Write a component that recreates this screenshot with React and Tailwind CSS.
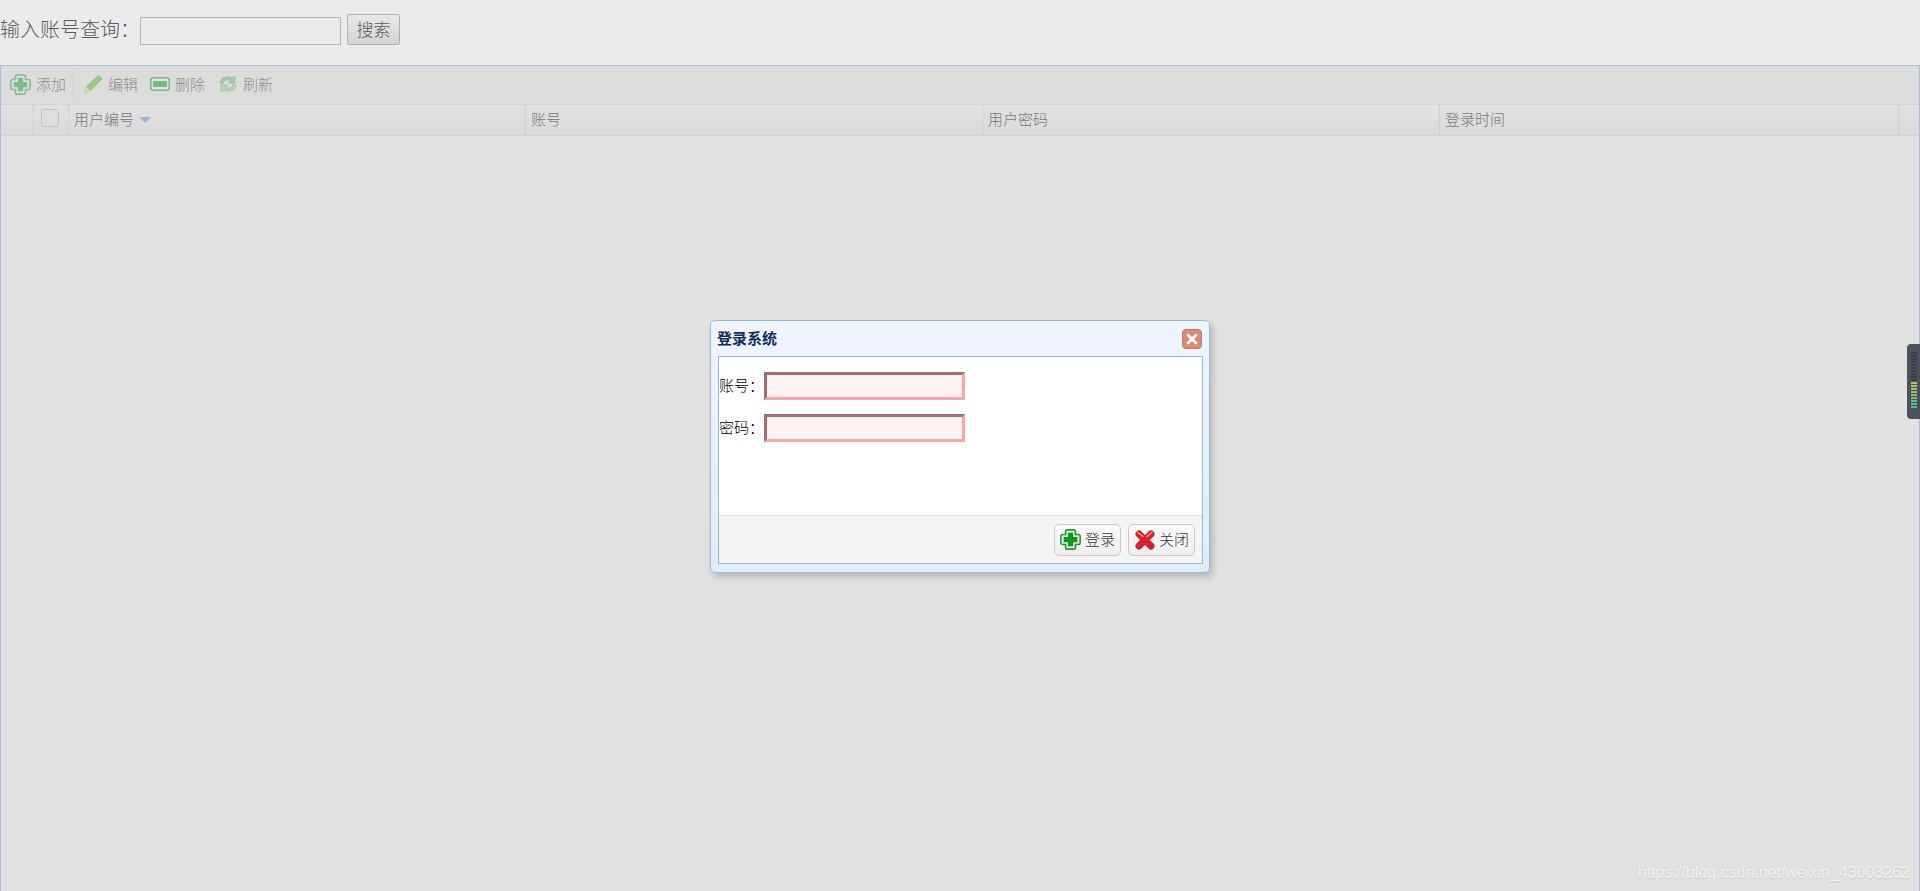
import React from "react";

function PlusIcon({ dim }) {
  return (
    <svg width="21" height="21" viewBox="0 0 20 20" className={dim ? "opacity-45" : ""}>
      <path d="M7 .8h6A1.700 1.700 0 0 1 14.700 2.500v2.800h2.800A1.700 1.700 0 0 1 19.200 7v6a1.700 1.700 0 0 1-1.700 1.700h-2.800v2.800a1.700 1.700 0 0 1-1.700 1.700H7a1.700 1.700 0 0 1-1.700-1.700v-2.800H2.500A1.700 1.700 0 0 1 .8 13V7a1.700 1.700 0 0 1 1.700-1.700h2.800V2.500A1.700 1.700 0 0 1 7 .8z" fill="#d8efd8" stroke="#2f8f3f" strokeWidth="1.500" />
      <path d="M7.500 3.500h5v4h4v5h-4v4h-5v-4h-4v-5h4z" fill="#0f9a1f" />
    </svg>
  );
}

function CrossIcon() {
  return (
    <svg width="22" height="22" viewBox="0 0 22 22">
      <path d="M5 5l12 12M17 5L5 17" stroke="#d8222a" strokeWidth="7" strokeLinecap="round" />
      <path d="M4 3.500l5 4M18 3.500l-5 4" stroke="#f6a0a0" strokeWidth="1.500" strokeLinecap="round" />
    </svg>
  );
}

function PencilIcon() {
  return (
    <svg width="19" height="20" viewBox="0 0 20 20" className="opacity-50">
      <path d="M1 19l1.500-6L15 1l4 3.500L7 17z" fill="#5cb82e" stroke="#3f9a1f" strokeWidth="0.800" />
      <path d="M1 19l1.500-6L7 17z" fill="#cfe3a8" />
    </svg>
  );
}

function MinusIcon() {
  return (
    <svg width="20" height="14" viewBox="0 0 20 14" className="opacity-50">
      <rect x="0.800" y="0.800" width="18.400" height="12.400" rx="3" fill="#dff0df" stroke="#1f8f35" strokeWidth="1.500" />
      <rect x="3" y="4" width="14" height="6" fill="#15a02a" />
    </svg>
  );
}

function ReloadIcon() {
  return (
    <svg width="20" height="20" viewBox="0 0 20 20" className="opacity-45">
      <path d="M2 9c0-5 7-8 12-5l3-2v7h-7l2.500-2.500C9 5 5.500 6 5 10z" fill="#5dae5d" stroke="#3f8f3f" strokeWidth="0.600" />
      <path d="M18 11c0 5-7 8-12 5l-3 2v-7h7l-2.500 2.500c3.500 1.500 7 .5 7.500-3.500z" fill="#8ccf7e" stroke="#3f8f3f" strokeWidth="0.600" />
    </svg>
  );
}

function ToolButton({ icon, label, className }) {
  return (
    <div className={"flex items-center gap-[5px] text-[15px] font-light text-[#8d8d8d] " + className}>
      {icon}
      <span>{label}</span>
    </div>
  );
}

function HeadCell({ width, children }) {
  return (
    <div className={"flex h-full items-center border-r border-dotted border-[#c4c4c4] pb-[1px] pl-[5px] text-[15px] font-light text-[#777] " + width}>
      {children}
    </div>
  );
}

function Field({ label }) {
  return (
    <div className="flex h-[28px] items-center">
      <label className="mb-[2px] w-[45px] text-[15px] font-light text-black">{label}</label>
      <input className="box-border h-[28px] w-[201px] border-[3px] border-t-[#a86c6c] border-l-[#a86c6c] border-r-[#ffa5a5] border-b-[#ffa5a5] bg-[#fff3f3]" />
    </div>
  );
}

export default function App() {
  const font = { fontFamily: '"Noto Sans CJK SC", "Liberation Sans", sans-serif' };

  return (
    <div className="relative flex h-screen flex-col overflow-hidden bg-[#ebebeb]" style={font}>
      {/* search row */}
      <div className="flex h-[65px] items-start">
        <span className="mt-[15px] text-[20px] leading-[28px] font-light text-[#5a5a5a]">输入账号查询：</span>
        <input className="mt-[17px] h-[28px] w-[201px] border border-[#b5b5b5] bg-[#ebebeb]" />
        <button className="mt-[14px] ml-[6px] h-[31px] w-[53px] rounded-[2px] border border-[#b0b0b0] bg-gradient-to-b from-[#e8e8e8] to-[#d4d4d4] pb-[2px] text-[17px] leading-[24px] font-light text-[#5a5a5a]">
          搜索
        </button>
      </div>

      {/* datagrid */}
      <div className="flex flex-1 flex-col border-x border-t border-[#a9bcd9] bg-[#e1e1e1]">
        <div className="flex h-[39px] items-center border-b border-[#d2d2d2] bg-[#dcdcdc] pb-[2px] pl-[9px]">
          <ToolButton icon={<PlusIcon dim />} label="添加" className="-mr-[1px]" />
          <div className="mr-[10px] ml-[8px] h-[30px] border-l border-[#d0d0d0]" />
          <ToolButton icon={<PencilIcon />} label="编辑" className="-mr-[1px]" />
          <ToolButton icon={<MinusIcon />} label="删除" className="ml-[13px]" />
          <ToolButton icon={<ReloadIcon />} label="刷新" className="ml-[13px]" />
        </div>
        <div className="flex h-[31px] items-center border-b border-[#d2d2d2] bg-gradient-to-b from-[#e2e2e2] to-[#dadada]">
          <div className="h-full w-[33px] border-r border-dotted border-[#c4c4c4]" />
          <div className="flex h-full w-[35px] items-center justify-center border-r border-dotted border-[#c4c4c4]">
            <div className="mr-[2px] mb-[4px] h-[18px] w-[18px] rounded-[3px] border border-[#c4c4c4] bg-[#dedede]" />
          </div>
          <HeadCell width="w-[457px]">
            用户编号
            <svg width="12" height="6" viewBox="0 0 12 6" className="ml-[5px]">
              <path d="M0 0h12L6 6z" fill="#9db4d3" />
            </svg>
          </HeadCell>
          <HeadCell width="w-[457px]">账号</HeadCell>
          <HeadCell width="w-[457px]">用户密码</HeadCell>
          <HeadCell width="w-[459px]">登录时间</HeadCell>
        </div>
      </div>

      {/* login dialog */}
      <div className="absolute top-[320px] left-[710px] h-[253px] w-[500px] rounded-[5px] border border-[#95b8e7] bg-gradient-to-b from-[#eff5ff] to-[#e0ecff] pr-[6px] pl-[7px] shadow-[3px_4px_6px_rgba(0,0,0,0.18)]">
        <div className="flex h-[35px] items-center justify-between">
          <span className="-ml-[1px] text-[15px] font-bold text-[#0e2d5f]">登录系统</span>
          <div className="mr-[1px] flex h-[20px] w-[20px] items-center justify-center rounded-[4px] border border-[#b5806c] bg-[#dd8a70]">
            <svg width="12" height="12" viewBox="0 0 12 12">
              <path d="M2 2l8 8M10 2l-8 8" stroke="#fff" strokeWidth="2.500" strokeLinecap="round" />
            </svg>
          </div>
        </div>
        <div className="flex h-[208px] flex-col border border-[#95b8e7] bg-white">
          <div className="flex h-[158px] flex-col gap-[14px] pt-[15px]">
            <Field label="账号：" />
            <Field label="密码：" />
          </div>
          <div className="flex flex-1 items-center justify-end gap-[7px] border-t border-[#dddddd] bg-[#f4f4f4] pr-[7px]">
            <button className="flex h-[32px] w-[67px] items-center justify-center gap-[4px] rounded-[5px] border border-[#c9c9c9] bg-gradient-to-b from-[#fafafa] to-[#eeeeee] text-[15px] font-light text-[#333]">
              <PlusIcon />
              登录
            </button>
            <button className="flex h-[32px] w-[67px] items-center justify-center gap-[3px] rounded-[5px] border border-[#c9c9c9] bg-gradient-to-b from-[#fafafa] to-[#eeeeee] text-[15px] font-light text-[#333]">
              <CrossIcon />
              关闭
            </button>
          </div>
        </div>
      </div>

      {/* side widget */}
      <div className="absolute top-[344px] right-0 flex h-[75px] w-[13px] flex-col items-center gap-[1px] rounded-l-[4px] bg-[#4c505c] pt-[8px]">
        {[0, 1, 2, 3, 4, 5, 6, 7, 8, 9].map((i) => (
          <div key={i} className="h-[2px] w-[6px] bg-[#3a3d47]" />
        ))}
        {["#b5c94f", "#a9c853", "#9cc75a", "#8ec662", "#80c56c", "#70c478", "#60c386", "#50c294", "#40c1a2"].map((c, i) => (
          <div key={i} className="h-[2px] w-[6px]" style={{ background: c }} />
        ))}
      </div>

      {/* watermark */}
      <div
        className="absolute right-[10px] bottom-[8px] text-[16px] leading-[20px] text-[#f2f2f2]"
        style={{ fontFamily: '"Liberation Sans", sans-serif', textShadow: "0 1px 1px rgba(0,0,0,0.12)" }}
      >
        https://blog.csdn.net/weixin_43003262
      </div>
    </div>
  );
}
